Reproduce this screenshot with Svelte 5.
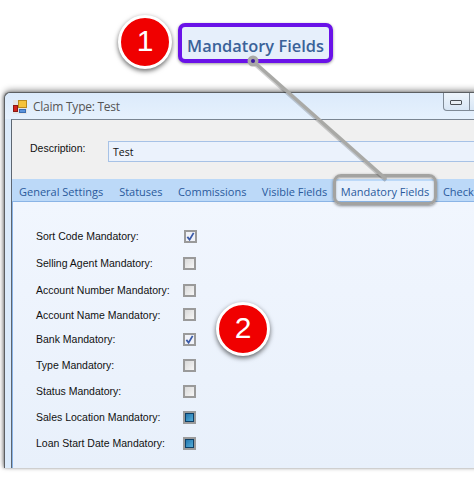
<script>
  const tabs = [
    { name: 'General Settings' },
    { name: 'Statuses' },
    { name: 'Commissions' },
    { name: 'Visible Fields' },
    { name: 'Mandatory Fields', active: true },
    { name: 'Check' }
  ];
  const rows = [
    { label: 'Sort Code Mandatory:', state: 'checked' },
    { label: 'Selling Agent Mandatory:', state: 'empty' },
    { label: 'Account Number Mandatory:', state: 'empty' },
    { label: 'Account Name Mandatory:', state: 'empty' },
    { label: 'Bank Mandatory:', state: 'checked' },
    { label: 'Type Mandatory:', state: 'empty' },
    { label: 'Status Mandatory:', state: 'empty' },
    { label: 'Sales Location Mandatory:', state: 'mixed' },
    { label: 'Loan Start Date Mandatory:', state: 'mixed' }
  ];
</script>

<div class="page">
  <div class="callout-area">
    <div class="window">
      <div class="titlebar">
        <svg class="appicon" width="14" height="14" viewBox="0 0 14 14">
          <rect x="0" y="0" width="14" height="14" fill="#e4e4e4" />
          <rect x="5.5" y="0.5" width="8" height="7" fill="#f5c33b" stroke="#b98a1d" />
          <rect x="0.5" y="5.5" width="4" height="6" fill="#d4241c" stroke="#8c1a14" />
          <rect x="6.5" y="9.5" width="6" height="3" fill="#5b93dc" stroke="#3b6db0" />
        </svg>
        <span class="title">Claim Type: Test</span>
        <div class="controls"><span class="minbtn"><i></i></span></div>
      </div>
      <div class="client">
        <div class="descrow">
          <span class="desclabel">Description:</span>
          <div class="descinput">Test</div>
        </div>
        <div class="tabs">
          {#each tabs as t}
            <span class="tab" class:active={t.active}>{t.name}</span>
          {/each}
        </div>
        <div class="panel">
          {#each rows as r, i}
            <div class="row">
              <span class="rowlabel">{r.label}</span>
              <span class="box {r.state}" class:first={i === 0}>
                {#if r.state === 'checked'}
                  <svg width="9" height="9" viewBox="0 0 10 10"><path d="M1.5 5.5 L4 8.5 L8.5 1" fill="none" stroke="#3a5aa8" stroke-width="2" /></svg>
                {/if}
              </span>
            </div>
          {/each}
        </div>
      </div>
    </div>
  </div>

  <div class="ring-tab"></div>

  <div class="big-label">Mandatory Fields</div>

  <svg class="connector" width="474" height="210" viewBox="0 0 474 210">
    <line x1="253" y1="61" x2="386" y2="179" stroke="#000" stroke-opacity="0.18" stroke-width="4" transform="translate(0 1.5)" />
    <line x1="253" y1="61" x2="386" y2="179" stroke="#a9a9a6" stroke-width="3.5" />
    <circle cx="253" cy="61" r="5.5" fill="#a9a9a6" />
    <circle cx="253" cy="61" r="2" fill="#3d1a9e" />
  </svg>

  <div class="badge one">1</div>
  <div class="badge two">2</div>
</div>

<style>
  :global(body) { margin: 0; background: #fff; }
  .page {
    position: relative;
    width: 474px;
    height: 495px;
    overflow: hidden;
    background: #fff;
    font-family: "Liberation Sans", Arial, sans-serif;
  }
  .callout-area { padding: 92px 0 0 4px; }
  .window {
    height: 376px;
    box-sizing: border-box;
    width: 490px;
    display: flex;
    flex-direction: column;
    background: #dcebfb;
    border: 1px solid #5c5f62;
    border-right: none;
    border-bottom: none;
    border-radius: 6px 0 0 0;
    box-shadow: 0 -2px 6px rgba(0,0,0,0.4), -1px 0 3px rgba(0,0,0,0.3);
    padding-left: 6px;
  }
  .titlebar {
    height: 26px;
    flex: none;
    display: flex;
    align-items: center;
    gap: 6px;
    margin-left: -6px;
    padding-left: 8px;
    background: linear-gradient(#dbeafb, #e6f1fd);
    border-radius: 6px 0 0 0;
    position: relative;
  }
  .appicon { flex: none; margin-top: 1px; }
  .title { font-size: 12px; color: #555; font-family: "Open Sans", sans-serif; letter-spacing: -0.25px; }
  .controls {
    position: absolute;
    left: 438px;
    top: 0;
    width: 60px;
    height: 17px;
    border: 1px solid #7f8a96;
    border-top: none;
    border-radius: 0 0 4px 4px;
    background: linear-gradient(#eef5fc, #d8e6f5);
  }
  .minbtn { display: block; width: 25px; height: 17px; border-right: 1px solid #7f8a96; position: relative; }
  .minbtn i {
    position: absolute;
    left: 6px;
    top: 7px;
    width: 10px;
    height: 3px;
    background: #e8eef4;
    border: 1px solid #4a4f55;
    border-radius: 1px;
  }
  .client {
    flex: 1;
    display: flex;
    flex-direction: column;
    border-left: 1px solid #5d6671;
    border-top: 1px solid #7a8592;
    background: #f0f0f0;
    min-height: 0;
  }
  .descrow {
    height: 59px;
    flex: none;
    display: flex;
    align-items: flex-start;
    box-sizing: border-box;
    padding: 21px 0 0 18px;
  }
  .desclabel { width: 78px; font-size: 10.5px; color: #111; line-height: 14px; }
  .descinput {
    flex: 1;
    height: 19px;
    box-sizing: content-box;
    border: 1px solid #a7c2e6;
    border-right: none;
    background: #ebf2fc;
    font-size: 10.5px;
    line-height: 20px;
    padding-left: 4px;
    color: #111;
    font-family: "Open Sans", sans-serif;
  }
  .tabs {
    height: 22px;
    flex: none;
    display: flex;
    align-items: center;
    box-sizing: border-box;
    padding: 2px 0 0 7px;
    background: #bcd9f8;
    white-space: nowrap;
    font-family: "Open Sans", sans-serif;
    font-size: 11px;
    color: #2a5a9c;
  }
  .tab { padding: 0 7.7px; }
  .tab:first-child { padding: 0 8.3px 0 0; }
  .tab.active {
    background: #e6f0fc;
    align-self: stretch;
    display: flex;
    align-items: center;
    padding: 0 5px;
    margin: 0 1px;
  }
  .panel {
    flex: 1;
    border-top: 1px solid #8ab4e6;
    border-left: 1px solid #8ab4e6;
    background: linear-gradient(#f1f6fe, #e8f0fb);
    box-sizing: border-box;
    padding: 21px 0 0 23px;
    display: grid;
    grid-template-rows: 26px 28px 26px 23px 26px 26px 26px 26px 26px;
    align-content: start;
  }
  .row { display: flex; align-items: center; font-size: 10.5px; color: #111; }
  .rowlabel { width: 147px; flex: none; }
  .box {
    width: 9px;
    height: 9px;
    flex: none;
    border: 2px solid #9a9a9a;
    background: linear-gradient(135deg, #d9d9d9, #f6f6f6);
    display: flex;
    align-items: center;
    justify-content: center;
  }
  .box.first { margin-left: 1px; }
  .box.checked { background: #f0f2f8; }
  .box.mixed {
    background: linear-gradient(135deg, #1d6fa8, #5ab4de);
    box-shadow: inset 0 0 0 1px #0d3f66;
  }
  .connector { position: absolute; left: 0; top: 0; pointer-events: none; }
  .ring-tab {
    position: absolute;
    left: 333px;
    top: 174px;
    width: 98px;
    height: 25px;
    border: 3px solid #a3a3a1;
    border-radius: 8px;
    box-shadow: 0 1px 3px rgba(0,0,0,0.45), inset 0 1px 2px rgba(0,0,0,0.3);
    pointer-events: none;
  }
  .badge {
    position: absolute;
    box-sizing: border-box;
    width: 54px;
    height: 54px;
    border: 3px solid #fff;
    border-radius: 50%;
    background: #f00000;
    color: #fff;
    font-size: 30px;
    line-height: 46px;
    text-align: center;
    box-shadow: 0 2px 5px rgba(0,0,0,0.6);
  }
  .one { left: 118px; top: 15px; }
  .two { left: 216px; top: 302px; }
  .big-label {
    position: absolute;
    left: 178px;
    top: 23px;
    box-sizing: border-box;
    width: 155px;
    height: 40px;
    padding-top: 3px;
    border: 4px solid #6a12e8;
    border-radius: 7px;
    background: #e6effb;
    box-shadow: 0 1px 3px rgba(0,0,0,0.4);
    color: #3a6299;
    font-family: "Open Sans", sans-serif;
    font-weight: 600;
    font-size: 16.4px;
    line-height: 31px;
    text-align: center;
    white-space: nowrap;
  }
</style>
